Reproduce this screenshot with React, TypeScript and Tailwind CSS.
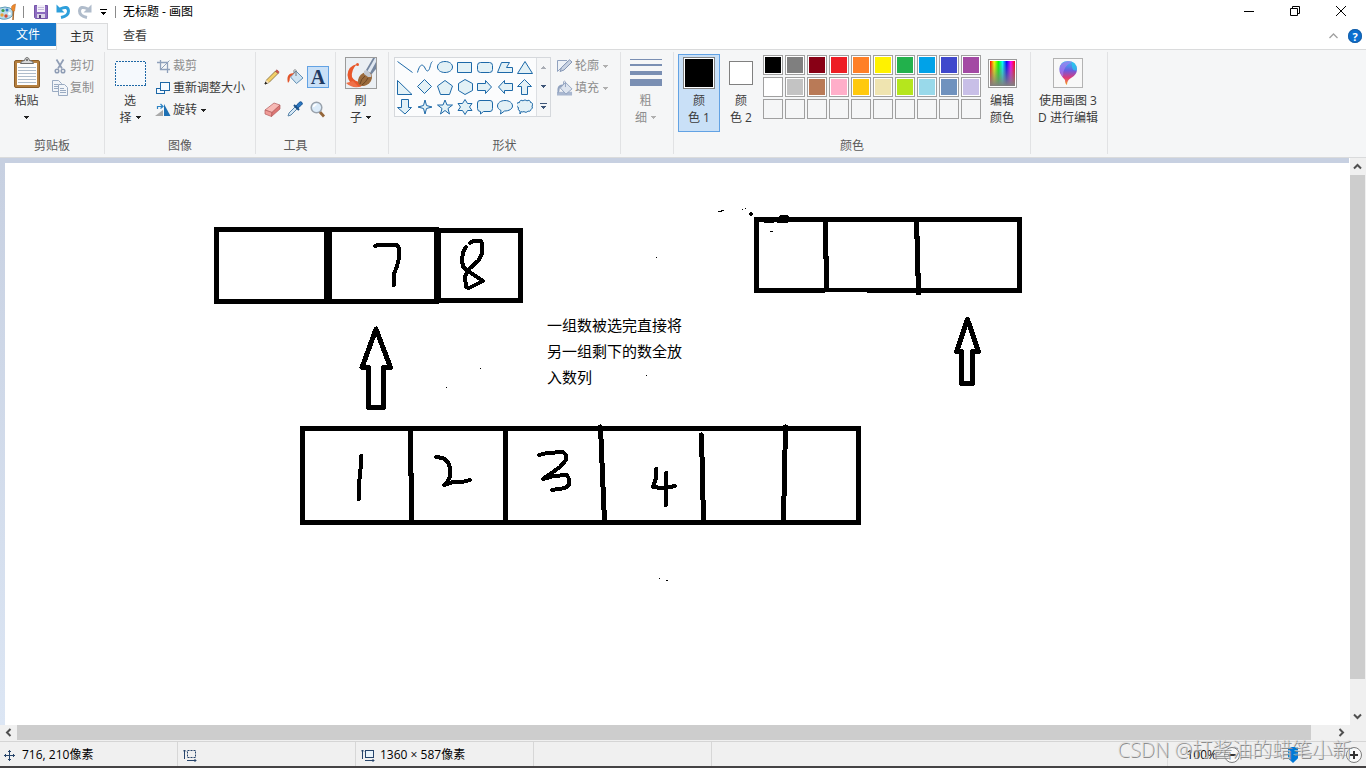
import React, { useState } from "react";

const ROW_ONE = ["#000000", "#7f7f7f", "#880015", "#ed1c24", "#ff7f27", "#fff200", "#22b14c", "#00a2e8", "#3f48cc", "#a349a4"];
const ROW_TWO = ["#ffffff", "#c3c3c3", "#b97a57", "#ffaec9", "#ffc90e", "#efe4b0", "#b5e61d", "#99d9ea", "#7092be", "#c8bfe7"];
const ROW_EMPTY = Array.from({ length: 10 }, () => "");

// Outlines on a 16x16 grid, in gallery order
const SHAPES = [
    { name: "直线", d: "M0.5 2.5L15.5 13.5", open: true },
    { name: "曲线", d: "M0.5 13.5C3 4 6 5 8 9C10 14 12 12 13 8C14 4 14.5 3 15.5 2.5", open: true },
    { name: "椭圆", d: "M8 2.5C12.5 2.5 15.5 5 15.5 8S12.5 13.5 8 13.5S0.5 11 0.5 8S3.5 2.5 8 2.5Z" },
    { name: "矩形", d: "M0.5 3.5H14.5V13.5H0.5Z" },
    { name: "圆角矩形", d: "M3.5 3.5H12.5Q15.5 3.5 15.5 6.5V10.5Q15.5 13.5 12.5 13.5H3.5Q0.5 13.5 0.5 10.5V6.5Q0.5 3.5 3.5 3.5Z" },
    { name: "多边形", d: "M4.5 3.5H12.5L9.5 8.5H15.5V13.5H0.5Z" },
    { name: "三角形", d: "M8 2.5L15.5 14.5H0.5Z" },
    { name: "直角三角形", d: "M0.5 1.5V15.5H15Z" },
    { name: "菱形", d: "M7.5 0.5L14.5 7.5L7.5 14.5L0.5 7.5Z" },
    { name: "五边形", d: "M8 1.5L15.5 7L12.5 15.5H3.5L0.5 7Z" },
    { name: "六边形", d: "M8 0.5L15.5 4.5V11.5L8 15.5L1.5 11.5V4.5Z" },
    { name: "右箭头", d: "M0.5 4.5H8.5V1.5L14.5 8L8.5 14.5V11.5H0.5Z" },
    { name: "左箭头", d: "M15.5 4.5H7.5V1.5L1.5 8L7.5 14.5V11.5H15.5Z" },
    { name: "上箭头", d: "M7.5 0.5L14.5 7.5H10.5V15.5H4.5V7.5H0.5Z" },
    { name: "下箭头", d: "M4.5 0.5H11.5V8.5H14.5L8 15L0.5 8.5H4.5Z" },
    { name: "四角星", d: "M8 1L9.5 6.5L15 8L9.5 9.5L8 15L6.5 9.5L1 8L6.5 6.5Z" },
    { name: "五角星", d: "M8 1L10 6H15.5L11 9.5L12.5 15L8 11.5L3.5 15L5 9.5L0.5 6H6Z" },
    { name: "六角星", d: "M8 0.5L10.5 4.5H15L12.5 8L15 11.5H10.5L8 15.5L5.5 11.5H1L3.5 8L1 4.5H5.5Z" },
    { name: "圆角标注", d: "M3 1.5H13Q15.5 1.5 15.5 4V9.5Q15.5 12.5 13 12.5H6.5L3.5 15V12.5Q0.5 12.5 0.5 9.5V4Q0.5 1.5 3 1.5Z" },
    { name: "椭圆标注", d: "M8 1.5C12.5 1.5 15.5 4 15.5 7S12 12 7.5 12L3.5 15L4 11.5C2 10.5 0.5 9 0.5 7C0.5 4 3.5 1.5 8 1.5Z" },
    { name: "云形标注", d: "M2.5 3.5A2 2 0 0 1 6 2A2.500 2.500 0 0 1 10 2A2 2 0 0 1 13.5 3.5A2 2 0 0 1 15 7A2.500 2.500 0 0 1 14 10.5A2 2 0 0 1 11 12A2.500 2.500 0 0 1 7 12.5A2 2 0 0 1 4.5 12.5L3 15L3 12A2.500 2.500 0 0 1 1.5 8.5A2.500 2.500 0 0 1 2.5 3.5Z" },
];

function DownArrow({ dim }: { dim?: boolean }) {
    return (
        <svg width="5" height="3" viewBox="0 0 5 3" shapeRendering="crispEdges" className={dim ? "fill-[#b0b0b0]" : "fill-[#222]"}>
            <path d="M0 0H5V1H4V2H3V3H2V2H1V1H0Z" />
        </svg>
    );
}

interface BigButtonProps {
    icon: React.ReactNode;
    lines: string[];
    width: string;
    arrow?: boolean;
    active?: boolean;
    disabled?: boolean;
}

function BigButton({ icon, lines, width, arrow, active, disabled }: BigButtonProps) {
    const look = active ? "border-[#62a2e4] bg-[#c9e0f7]" : "border-transparent";
    return (
        <button
            disabled={disabled}
            className={`mt-0.5 flex h-[78px] shrink-0 flex-col items-center border ${width} ${look} ${disabled ? "text-[#8d8d8d]" : "text-[#3b3b3b]"}`}
        >
            <span className="mb-px flex h-9 items-center justify-center">{icon}</span>
            {lines.map((line, i) => (
                <span key={i} className="flex h-[17px] items-center justify-center gap-1 whitespace-pre">
                    {line}
                    {arrow && i === lines.length - 1 && <DownArrow dim={disabled} />}
                </span>
            ))}
        </button>
    );
}

interface SmallButtonProps {
    icon: React.ReactNode;
    label: string;
    arrow?: boolean;
    disabled?: boolean;
}

function SmallButton({ icon, label, arrow, disabled }: SmallButtonProps) {
    return (
        <button
            disabled={disabled}
            className={`flex h-[22px] items-center gap-0.5 whitespace-nowrap ${disabled ? "text-[#8d8d8d]" : "text-[#3b3b3b]"}`}
        >
            <span className="flex w-4 justify-center">{icon}</span>
            <span>{label}</span>
            {arrow && <span className="ml-0.5"><DownArrow dim={disabled} /></span>}
        </button>
    );
}

function Group({ label, width, children }: { label?: string; width: string; children: React.ReactNode }) {
    return (
        <section className={`flex shrink-0 flex-col border-r border-[#e1e2e4] ${width}`}>
            <div className="flex h-[85px] items-start">{children}</div>
            <div className="h-[17px] text-center leading-[17px] text-[#5a5a5a]">{label}</div>
        </section>
    );
}

function PaintLogo() {
    return (
        <svg width="18" height="18" viewBox="0 0 18 18">
            <path d="M0 5Q5 3 10 5Q14 7 13 11Q12 15 6 16Q0 17 -2 13V7Z" fill="#b9dcec" stroke="#5d9cb8" />
            <circle cx="3" cy="7.500" r="1.600" fill="#3e9d4c" />
            <circle cx="7" cy="7" r="1.500" fill="#3978c9" />
            <circle cx="2" cy="12" r="1.700" fill="#e8a33b" />
            <circle cx="6" cy="13" r="1.700" fill="#d44b32" />
            <circle cx="9.500" cy="10.500" r="1.500" fill="#fff" />
            <path d="M13.5 8L13 17" stroke="#a86a31" strokeWidth="1.500" />
            <path d="M11.5 6Q11 3 13 2L15.5 1L15 5L14.5 8H12.5Z" fill="#ee8a2c" stroke="#b8601c" strokeWidth="0.500" />
        </svg>
    );
}

function SaveIcon() {
    return (
        <svg width="14" height="14" viewBox="0 0 14 14">
            <path d="M0.5 0.5H13.5V13.5H1.5L0.5 12.5Z" fill="#8d6cc0" stroke="#7554a8" />
            <path d="M3 0H11V7H3Z" fill="#f3f0f9" />
            <path d="M4 2.5H10M4 4.5H10" stroke="#c9bfdd" />
            <path d="M3 9H11V13H3Z" fill="#d9d3e6" />
            <path d="M5 10H7V13H5Z" fill="#55407c" />
        </svg>
    );
}

function UndoIcon({ flip }: { flip?: boolean }) {
    const color = flip ? "#b0bccb" : "#2e9fdb";
    return (
        <svg width="15" height="15" viewBox="0 0 15 15" className={flip ? "-scale-x-100" : ""}>
            <path d="M0.5 0.5V8.5H8.5Z" fill={color} />
            <path d="M4 5Q12 1 12.5 7Q12.5 12 5 13.5" fill="none" stroke={color} strokeWidth="3" />
        </svg>
    );
}

function PasteIcon() {
    return (
        <svg width="26" height="32" viewBox="0 0 26 32">
            <rect x="0.500" y="3.500" width="25" height="27" rx="1.500" fill="#b47f3f" stroke="#8a5c28" />
            <path d="M3 6H23V28H3Z" fill="#fdfdfd" />
            <path d="M4 10.5H22M4 13.5H22M4 16.5H22M4 19.5H22M4 22.5H22M4 25.5H22" stroke="#aebccb" />
            <path d="M6.5 6.5Q7 3.5 10.5 3.5Q11 0.5 13 0.5T15.5 3.5Q19 3.5 19.5 6.5Z" fill="#d8d8d8" stroke="#6c6c6c" />
            <circle cx="13" cy="3" r="1" fill="#5c5c5c" />
        </svg>
    );
}

function CutIcon() {
    return (
        <svg width="12" height="15" viewBox="0 0 12 15" fill="none" stroke="#8f9db5">
            <path d="M2.5 0.5L8 9.5M9.5 0.5L4 9.5" strokeWidth="1.700" />
            <circle cx="3" cy="12" r="1.800" strokeWidth="1.500" />
            <circle cx="9" cy="12" r="1.800" strokeWidth="1.500" />
        </svg>
    );
}

function CopyIcon() {
    return (
        <svg width="16" height="16" viewBox="0 0 16 16" fill="#f2f5f9" stroke="#9aabc2">
            <path d="M0.5 0.5H6.5L9.5 3.5V11.5H0.5Z" />
            <path d="M2 4.5H6M2 6.5H6M2 8.5H6" />
            <path d="M6.5 4.5H12.5L15.5 7.5V15.5H6.5Z" />
            <path d="M8 8.5H12M8 10.5H14M8 12.5H14" />
        </svg>
    );
}

function CropIcon() {
    return (
        <svg width="13" height="13" viewBox="0 0 13 13" fill="none" stroke="#8fa0bb">
            <path d="M3.5 0V9.5H13M0 2.5H10.5V13" strokeWidth="1.300" />
            <path d="M4 9L12.5 0.5" />
        </svg>
    );
}

function ResizeIcon() {
    return (
        <svg width="14" height="13" viewBox="0 0 14 13" fill="#f5faff" stroke="#1c67a6" shapeRendering="crispEdges">
            <path d="M0.5 6.5H8.5V11.5H0.5Z" />
            <path d="M4.5 0.5H13.5V8.5H4.5Z" />
        </svg>
    );
}

function RotateIcon() {
    return (
        <svg width="16" height="14" viewBox="0 0 16 14">
            <path d="M0 13L8 7V13Z" fill="#a9a9a9" />
            <path d="M9 1L15.5 13H9Z" fill="#1e70b4" />
            <path d="M2.5 6V3.5H7M5.5 1L8 3.5L5.5 5.5" fill="none" stroke="#2c83c4" strokeWidth="1.200" />
        </svg>
    );
}

function PencilIcon() {
    return (
        <svg width="16" height="16" viewBox="0 0 16 16">
            <path d="M1 15L2.5 11L11.5 2L14 4.5L5 13.5Z" fill="#f3cf68" stroke="#7d6838" strokeWidth="0.800" />
            <path d="M11.5 2L13 0.8L15.2 3L14 4.5Z" fill="#d8534b" stroke="#8a3b35" strokeWidth="0.500" />
            <path d="M1 15L2.5 11L5 13.5Z" fill="#f2dfc0" />
            <path d="M1 15L1.6 13.2L2.8 14.4Z" fill="#222" stroke="#222" />
        </svg>
    );
}

function BucketIcon({ dim }: { dim?: boolean }) {
    return (
        <svg width="17" height="16" viewBox="0 0 17 16">
            {dim && <path d="M0 12H16V16H0Z" fill="#a9b7d0" />}
            <path d="M9 2L16 9L9.5 14.5L3.5 8Z" fill={dim ? "#dde4ef" : "#cfe3f2"} stroke={dim ? "#91a2bf" : "#6290b5"} />
            <path d="M9 7V1.5Q8 -0.5 7 1.5V4" fill="none" stroke={dim ? "#91a2bf" : "#777"} />
            <path d="M1 14Q-1 6 4 4.5L7.5 4L3 8Q3 12 1 14Z" fill={dim ? "#91a2bf" : "#e2552b"} />
        </svg>
    );
}

function EraserIcon() {
    return (
        <svg width="17" height="15" viewBox="0 0 17 15" stroke="#b35b5b" strokeWidth="0.700">
            <path d="M1 8L10 1L16 3L8 10.5Z" fill="#f7b9b5" />
            <path d="M1 8L8 10.5L7.5 14.5L1 12Z" fill="#f09b97" />
            <path d="M8 10.5L16 3V7L7.5 14.5Z" fill="#dd7573" />
        </svg>
    );
}

function PickerIcon() {
    return (
        <svg width="16" height="16" viewBox="0 0 16 16">
            <path d="M1 15L2 12L8 6L10 8L4 14Z" fill="#d5e7f5" stroke="#5c87ab" />
            <path d="M7 4L12 9" stroke="#174e86" strokeWidth="2" />
            <path d="M9 5L12 1.5Q14 0 15 1.5T14.5 4L11 7Z" fill="#2b78c2" stroke="#1a5595" />
        </svg>
    );
}

function MagnifierIcon() {
    return (
        <svg width="16" height="17" viewBox="0 0 16 17">
            <path d="M9.5 10.5L14 15.5" stroke="#94663a" strokeWidth="2.800" />
            <circle cx="6.500" cy="6.500" r="5.300" fill="#dcecfa" stroke="#9aa3ad" strokeWidth="1.500" />
            <path d="M3.5 6Q4 3.5 6.5 3.5" fill="none" stroke="#fff" strokeWidth="1.500" />
        </svg>
    );
}

function BrushIcon() {
    return (
        <svg width="32" height="32" viewBox="0 0 32 32">
            <rect x="0.500" y="0.500" width="31" height="31" fill="#ebeff3" stroke="#9b9b9b" />
            <path d="M12 7Q3 9 2.500 18Q3 27 13 30Q18 30 19 25Q10 26 7 20Q6 13 12 7Z" fill="#e9572a" />
            <path d="M1 26Q6 31 14 30L8 24Z" fill="#ef7048" />
            <circle cx="12.500" cy="7.500" r="1.500" fill="#e9572a" />
            <path d="M21 13L28 1H31V12L26 18Z" fill="#75869f" />
            <path d="M22.5 14L30 1H31V5L25 16Z" fill="#dfe7f1" />
            <ellipse cx="20" cy="22" rx="8" ry="6" fill="#9a6a3c" transform="rotate(-45 20 22)" />
            <path d="M19 14Q21 12 24 15T26 20L23 20L19 17Z" fill="#c3c9d2" />
            <path d="M20 19Q16 22 15 27M23 21Q21 25 17 28" fill="none" stroke="#6c4522" />
        </svg>
    );
}

function OutlineIcon() {
    return (
        <svg width="16" height="14" viewBox="0 0 16 14">
            <path d="M10 1.5H0.5V12.5L11 2" fill="#eef2f7" stroke="#91a2bf" />
            <path d="M3 12.5L4.5 8.5L12.5 0.8L15 3L7 11Z" fill="#c9d3e3" stroke="#8496b5" />
        </svg>
    );
}

function LineWidthIcon() {
    return (
        <svg width="32" height="28" viewBox="0 0 32 28" className="fill-[#7a8fb3]">
            <path d="M0 0H32V1H0ZM0 5H32V7H0ZM0 12H32V16H0ZM0 20H32V27H0Z" />
        </svg>
    );
}

function Paint3DIcon() {
    return (
        <svg width="30" height="30" viewBox="0 0 30 30">
            <defs>
                <linearGradient id="drop" x1="0" y1="0" x2="0" y2="1">
                    <stop offset="0" stopColor="#32c3f2" />
                    <stop offset="0.400" stopColor="#6b5be0" />
                    <stop offset="0.700" stopColor="#e03a78" />
                    <stop offset="1" stopColor="#f6a623" />
                </linearGradient>
            </defs>
            <rect x="0.500" y="0.500" width="29" height="29" fill="#f8f8f8" stroke="#b3b3b3" />
            <path d="M15 3Q23 3 24 11Q24 17 18 20Q14 22 14 27Q12 26 12 22Q6 16 6.5 11Q7 3 15 3Z" fill="url(#drop)" />
            <path d="M15 3Q7 4 6.5 11Q7 16 10 19Q9 9 19 4Q17 3 15 3Z" fill="#a87bf0" opacity="0.700" />
            <path d="M19 4Q24 6 24 12Q20 14 19 9Z" fill="#23cfee" opacity="0.700" />
        </svg>
    );
}

function TitleBar() {
    return (
        <header className="flex h-[23px] shrink-0 items-center text-black">
            <PaintLogo />
            <span className="ml-[5px] h-3 w-px bg-[#8a8a8a]" />
            <button aria-label="保存" className="ml-2.5"><SaveIcon /></button>
            <button aria-label="撤消" className="ml-2"><UndoIcon /></button>
            <button aria-label="重做" className="ml-1.5"><UndoIcon flip /></button>
            <button aria-label="自定义快速访问工具栏" className="ml-2">
                <svg width="7" height="6" viewBox="0 0 7 6" shapeRendering="crispEdges">
                    <path d="M0 0H7V1H0ZM1 3H6V4H5V5H4V6H3V5H2V4H1Z" />
                </svg>
            </button>
            <span className="ml-2 h-3 w-px bg-[#8a8a8a]" />
            <h1 className="ml-[7px] flex-1 leading-[22px]">无标题 - 画图</h1>
            <div className="mr-0.5 flex h-full items-center pb-0.5">
                <button aria-label="最小化" className="flex w-[46px] justify-center">
                    <svg width="10" height="10" viewBox="0 0 10 10"><path d="M0 5H10V6H0Z" /></svg>
                </button>
                <button aria-label="还原" className="flex w-[46px] justify-center">
                    <svg width="10" height="10" viewBox="0 0 10 10" fill="none" stroke="#000"><path d="M0.5 2.5H7.5V9.5H0.5ZM2.5 2.5V0.5H9.5V7.5H7.5" /></svg>
                </button>
                <button aria-label="关闭" className="flex w-[46px] justify-center">
                    <svg width="10" height="10" viewBox="0 0 10 10" stroke="#000"><path d="M0 0L10 10M10 0L0 10" /></svg>
                </button>
            </div>
        </header>
    );
}

function Tabs() {
    return (
        <nav className="flex h-[27px] shrink-0 items-stretch">
            <div className="border-b border-[#dadbdc]">
                <button className="h-[23px] w-14 bg-[#1979ca] text-white">文件</button>
            </div>
            <button className="w-[52px] border-x border-t border-[#dadbdc] bg-[#f5f6f7] text-[#2b2b2b]">主页</button>
            <div className="flex flex-1 items-center justify-between border-b border-[#dadbdc] pr-1">
                <button className="w-[54px] text-[#3b3b3b]">查看</button>
                <div className="flex items-center gap-2.5">
                    <button aria-label="最小化功能区">
                        <svg width="9" height="6" viewBox="0 0 9 6" fill="none" stroke="#a0a0a0" strokeWidth="1.300"><path d="M0.5 5L4.5 1L8.5 5" /></svg>
                    </button>
                    <button aria-label="帮助" className="flex size-3.5 items-center justify-center rounded-full bg-[#0a6fd0] text-[11px] leading-none font-bold text-white ring-1 ring-[#1b5fa5] ring-inset">
                        ?
                    </button>
                </div>
            </div>
        </nav>
    );
}

function ShapeGallery() {
    return (
        <div className="mt-[5px] ml-[5px] flex h-[60px] border border-[#d5d8dc] bg-[#fbfcfd]">
            <div className="-my-px grid grid-cols-7 pr-px">
                {SHAPES.map((shape) => (
                    <button key={shape.name} aria-label={shape.name} className="flex size-5 items-center justify-center">
                        <svg width="16" height="16" viewBox="0 0 16 16" fill={shape.open ? "none" : "#e3f1f6"} stroke="#1d69a8">
                            <path d={shape.d} />
                        </svg>
                    </button>
                ))}
            </div>
            <div className="flex w-3.5 flex-col border-l border-[#dcdfe3] bg-[#f5f6f7]">
                <button aria-label="向上滚动" className="flex flex-1 items-center justify-center">
                    <svg width="5" height="3" viewBox="0 0 5 3" fill="#a9adb5" shapeRendering="crispEdges"><path d="M2 0H3V1H4V2H5V3H0V2H1V1H2Z" /></svg>
                </button>
                <button aria-label="向下滚动" className="flex flex-1 items-center justify-center">
                    <svg width="5" height="3" viewBox="0 0 5 3" fill="#3d5578" shapeRendering="crispEdges"><path d="M0 0H5V1H4V2H3V3H2V2H1V1H0Z" /></svg>
                </button>
                <button aria-label="更多形状" className="flex flex-1 items-center justify-center">
                    <svg width="7" height="6" viewBox="0 0 7 6" fill="#3d5578" shapeRendering="crispEdges"><path d="M0 0H7V1H0ZM1 3H6V4H5V5H4V6H3V5H2V4H1Z" /></svg>
                </button>
            </div>
        </div>
    );
}

function Palette() {
    return (
        <div className="mt-[3px] ml-px grid shrink-0 grid-cols-10 gap-0.5">
            {[...ROW_ONE, ...ROW_TWO, ...ROW_EMPTY].map((color, i) => (
                <button
                    key={i}
                    aria-label={color || "自定义颜色"}
                    className={`size-5 border border-[#a0a0a0] p-px ${color ? "bg-white" : "bg-[#f5f6f7]"}`}
                >
                    <span className="block size-4" style={{ backgroundColor: color || undefined }} />
                </button>
            ))}
        </div>
    );
}

function Ribbon() {
    return (
        <div className="flex shrink-0 border-b border-[#dadbdc] bg-[#f5f6f7] pt-0.5 pb-[3px]">
            <Group label="剪贴板" width="w-[105px]">
                <BigButton width="ml-1 w-[45px]" icon={<PasteIcon />} lines={["粘贴", ""]} arrow />
                <div className="mt-[3px] ml-[3px]">
                    <SmallButton icon={<CutIcon />} label="剪切" disabled />
                    <SmallButton icon={<CopyIcon />} label="复制" disabled />
                </div>
            </Group>
            <Group label="图像" width="w-[151px]">
                <BigButton
                    width="w-[50px]"
                    icon={
                        <svg width="31" height="25" viewBox="0 0 31 25" shapeRendering="crispEdges">
                            <rect x="0.500" y="0.500" width="30" height="24" fill="#f5f9fd" stroke="#1c67a6" strokeDasharray="2 1" />
                        </svg>
                    }
                    lines={["选", "择"]}
                    arrow
                />
                <div className="mt-[3px]">
                    <SmallButton icon={<CropIcon />} label="裁剪" disabled />
                    <SmallButton icon={<ResizeIcon />} label="重新调整大小" />
                    <SmallButton icon={<RotateIcon />} label="旋转" arrow />
                </div>
            </Group>
            <Group label="工具" width="w-[80px]">
                <div className="mt-3.5 ml-[5px] grid grid-cols-3 gap-x-px gap-y-2.5">
                    <button aria-label="铅笔" className="flex size-[22px] items-center justify-center"><PencilIcon /></button>
                    <button aria-label="用颜色填充" className="flex size-[22px] items-center justify-center"><BucketIcon /></button>
                    <button aria-label="文本" className="flex size-[22px] items-center justify-center border border-[#62a2e4] bg-[#c9e0f7] font-['Liberation_Serif',serif] text-xl leading-none font-bold text-[#1f3a63]">
                        A
                    </button>
                    <button aria-label="橡皮擦" className="flex size-[22px] items-center justify-center"><EraserIcon /></button>
                    <button aria-label="颜色选取器" className="flex size-[22px] items-center justify-center"><PickerIcon /></button>
                    <button aria-label="放大镜" className="flex size-[22px] items-center justify-center"><MagnifierIcon /></button>
                </div>
            </Group>
            <Group width="w-[53px]">
                <BigButton width="ml-0.5 w-[45px]" icon={<BrushIcon />} lines={["刷", "子"]} arrow />
            </Group>
            <Group label="形状" width="w-[232px]">
                <ShapeGallery />
                <div className="mt-[3px] ml-1.5">
                    <SmallButton icon={<OutlineIcon />} label="轮廓" arrow disabled />
                    <SmallButton icon={<BucketIcon dim />} label="填充" arrow disabled />
                </div>
            </Group>
            <Group width="w-[53px]">
                <BigButton width="ml-0.5 w-[45px]" icon={<LineWidthIcon />} lines={["粗", "细"]} arrow disabled />
            </Group>
            <Group label="颜色" width="w-[357px]">
                <BigButton
                    width="ml-1 w-[42px]"
                    icon={<span className="size-8 border border-[#808080] bg-white p-px"><span className="block size-full bg-black" /></span>}
                    lines={["颜", "色 1"]}
                    active
                />
                <BigButton
                    width="w-[42px]"
                    icon={<span className="size-6 border border-[#808080] bg-white" />}
                    lines={["颜", "色 2"]}
                />
                <Palette />
                <BigButton
                    width="w-[42px]"
                    icon={
                        <span className="size-[29px] border border-[#9a9a9a] bg-white p-px">
                            <span className="block size-full bg-[linear-gradient(to_top,#808080,transparent),linear-gradient(to_right,#f00,#ff0,#0f0,#0ff,#00f,#f0f,#f00)]" />
                        </span>
                    }
                    lines={["编辑", "颜色"]}
                />
            </Group>
            <Group width="w-[77px]">
                <BigButton width="ml-0.5 w-[70px]" icon={<Paint3DIcon />} lines={["使用画图 3", "D 进行编辑"]} />
            </Group>
        </div>
    );
}

function Drawing() {
    return (
        <svg width="1360" height="587" viewBox="5 163 1360 587" fill="none" stroke="#000" shapeRendering="crispEdges">
            {/* top left array */}
            <g strokeWidth="5">
                <path d="M216.5 229.5H326.5V301.5H216.5Z" />
                <path d="M329.5 229.5H436.5V301.5H329.5Z" />
                <path d="M438.5 230.5H520.5V300.5H438.5Z" />
            </g>
            {/* top right array */}
            <g strokeWidth="5" strokeLinecap="round">
                <path d="M756.5 219.5H1019.5V290.5H756.5Z" strokeLinejoin="miter" />
                <path d="M825.5 219V257L826.5 258V290" />
                <path d="M916.5 219V237L917.5 238V274L918.5 275V293" />
                <path d="M825 292.5H867" stroke="#fff" strokeWidth="1" strokeLinecap="butt" />
            </g>
            {/* bottom array */}
            <g strokeWidth="5" strokeLinecap="round">
                <path d="M302.5 428.5H858.5V522.5H302.5Z" />
                <path d="M410.5 429V474L411.5 475V521" />
                <path d="M505.5 429V521" />
                <path d="M600.5 427L604.5 522" />
                <path d="M701.5 435L703.5 520" />
                <path d="M785.5 427L783.5 520" />
            </g>
            {/* pointers */}
            <g strokeWidth="5" strokeLinejoin="round">
                <path d="M376 329L362 367.5H368.5V407.5H383.5V367.5H390.5Z" />
                <path d="M967.5 319.5L956.5 351.5H961.5V383.5H972.5V351.5H978.5Z" />
            </g>
            {/* pen strokes */}
            <g strokeWidth="4" strokeLinecap="round" strokeLinejoin="round">
                <polyline points="375,246 378,245 397,245 399,248 399,258 397,266 394,274 394,285" />
                <polyline points="470,243 473,241 481,241 482,244 482,253 479,260 468,270 465,277 466,287 469,288 483,281 468,271 463,267 462,260 463,252 466,247" />
                <polyline points="361,456 361,464 359,484 359,499" />
                <polyline points="436,457 443,458 448,462 450,468 450,476 448,481 444,485 453,482 462,482 470,480" />
                <polyline points="539,455 547,453 563,452 566,455 566,460 560,467 543,479 554,476 567,475 569,479 569,485 565,488 552,490" />
                <polyline points="656,469 656,478 653,487 662,488 670,487 675,486" />
                <polyline points="666,473 666,505" />
            </g>
            {/* stray marks */}
            <g fill="#000" stroke="none">
                <path d="M750 212H752V213H753V215H752V216H750V215H749V213H750Z" />
                <path d="M778 217L780 215H787L790 218L788 223H777ZM764 218H774V223H764Z" />
                <path d="M718 211H722V212H718ZM721 210H724V211H721ZM742 209H743V210H742ZM745 208H746V209H745ZM770 231H773V232H770Z" />
                <path d="M656 257H657V258H656ZM480 368H481V369H480ZM446 387H447V388H446ZM646 375H647V376H646ZM659 578H660V579H659ZM666 580H668V581H666Z" />
            </g>
        </svg>
    );
}

function ScrollArrow({ label, d, size }: { label: string; d: string; size: string }) {
    return (
        <button aria-label={label} className={`flex shrink-0 items-center justify-center ${size}`}>
            <svg width="9" height="9" viewBox="0 0 9 9" fill="none" stroke="#505050" strokeWidth="2"><path d={d} /></svg>
        </button>
    );
}

function Workspace() {
    return (
        <div className="flex min-h-0 flex-1">
            <div className="flex min-w-0 flex-1 flex-col">
                <div className="h-[5px] shrink-0 bg-[#c7d0e1]" />
                <div className="flex min-h-0 flex-1">
                    <div className="w-[5px] shrink-0 bg-linear-to-b from-[#c7d0e1] to-[#dce6f4]" />
                    <main className="relative min-w-0 flex-1 overflow-hidden bg-white">
                        <Drawing />
                        <p className="absolute top-[149px] left-[542px] w-[136px] text-[15px] leading-[26px] break-all text-black">
                            一组数被选完直接将另一组剩下的数全放入数列
                        </p>
                    </main>
                </div>
            </div>
            <div className="ml-px flex w-4 shrink-0 flex-col bg-[#f0f0f0]">
                <ScrollArrow label="向上" size="h-[17px] w-[15px]" d="M1 6.5L4.5 3L8 6.5" />
                <div className="flex-1">
                    <div className="h-[94.6%] w-[15px] bg-[#cdcdcd]" />
                </div>
                <ScrollArrow label="向下" size="h-[17px] w-[15px]" d="M1 2.5L4.5 6L8 2.5" />
            </div>
        </div>
    );
}

function HorizontalScroll() {
    return (
        <div className="flex h-4 shrink-0 bg-[#f0f0f0] pr-4">
            <ScrollArrow label="向左" size="h-[15px] w-[17px]" d="M6.5 1L3 4.5L6.5 8" />
            <div className="flex-1">
                <div className="h-[15px] w-[98.3%] bg-[#cdcdcd]" />
            </div>
            <ScrollArrow label="向右" size="h-[15px] w-[17px]" d="M2.5 1L6 4.5L2.5 8" />
        </div>
    );
}

function StatusBar() {
    const [zoom, setZoom] = useState(50);

    return (
        <footer className="relative flex h-[27px] shrink-0 items-stretch border-t border-b-2 border-t-[#d5d5d5] border-b-[#454344] bg-[#f0f0f0] text-black">
            <div className="flex w-[178px] items-center gap-[7px] border-r border-[#d7d7d7] pt-0.5 pl-1">
                <svg width="11" height="11" viewBox="0 0 11 11" fill="none" stroke="#26446b">
                    <path d="M5.5 0V11M0 5.5H11M4 2L5.5 0.5L7 2M4 9L5.5 10.5L7 9M2 4L0.5 5.5L2 7M9 4L10.5 5.5L9 7" />
                </svg>
                <span>716, 210像素</span>
            </div>
            <div className="flex w-[178px] items-center border-r border-[#d7d7d7] pt-0.5 pl-[5px]">
                <svg width="14" height="13" viewBox="0 0 14 13" fill="none" stroke="#26446b">
                    <path d="M1.5 10V1M0 2.5L1.5 1L3 2.5M4 11.5H13M11.5 10L13 11.5L11.5 13" />
                    <rect x="4.500" y="1.500" width="8" height="7" strokeDasharray="2 1" />
                </svg>
            </div>
            <div className="flex w-[178px] items-center gap-[5px] border-r border-[#d7d7d7] pt-0.5 pl-[5px]">
                <svg width="14" height="13" viewBox="0 0 14 13" fill="none" stroke="#26446b">
                    <path d="M1.5 10V1M0 2.5L1.5 1L3 2.5M4 11.5H13M11.5 10L13 11.5L11.5 13" />
                    <rect x="4.500" y="1.500" width="8" height="7" fill="#e9f3fa" />
                </svg>
                <span>1360 × 587像素</span>
            </div>
            <div className="w-[178px] border-r border-[#d7d7d7]" />
            <div className="flex-1 border-r border-[#dedede]" />
            <div className="flex w-[198px] items-center justify-end pt-0.5 pr-1">
                <label htmlFor="zoom" className="pr-[7px]">100%</label>
                <button aria-label="缩小" className="flex size-4 items-center justify-center rounded-full border border-[#7d7d7d] bg-[#fafafa]">
                    <svg width="8" height="8" viewBox="0 0 8 8" fill="#333"><path d="M0 3H8V5H0Z" /></svg>
                </button>
                <input
                    id="zoom"
                    type="range"
                    value={zoom}
                    onChange={(e) => setZoom(Number(e.target.value))}
                    className="h-4 w-[106px] appearance-none bg-[linear-gradient(#c4c4c4,#c4c4c4)] bg-size-[100%_1px] bg-center bg-no-repeat [&::-webkit-slider-thumb]:h-4 [&::-webkit-slider-thumb]:w-2.5 [&::-webkit-slider-thumb]:appearance-none [&::-webkit-slider-thumb]:bg-[#0078d7] [&::-webkit-slider-thumb]:[clip-path:polygon(0_0,100%_0,100%_70%,50%_100%,0_70%)]"
                />
                <button aria-label="放大" className="flex size-4 items-center justify-center rounded-full border border-[#7d7d7d] bg-[#fafafa]">
                    <svg width="8" height="8" viewBox="0 0 8 8" fill="#333"><path d="M0 3H3V0H5V3H8V5H5V8H3V5H0Z" /></svg>
                </button>
            </div>
            <span className="pointer-events-none absolute right-3.5 bottom-0 text-xl leading-8 font-light whitespace-nowrap text-[#dcdcdc]/70 [text-shadow:1px_1px_0_#8c8c8c]">
                CSDN @打酱油的蜡笔小新
            </span>
        </footer>
    );
}

export default function App() {
    return (
        <div className="flex h-screen flex-col overflow-hidden bg-white font-['Open_Sans','Noto_Sans_CJK_SC',sans-serif] text-xs">
            <TitleBar />
            <Tabs />
            <Ribbon />
            <Workspace />
            <HorizontalScroll />
            <StatusBar />
        </div>
    );
}
